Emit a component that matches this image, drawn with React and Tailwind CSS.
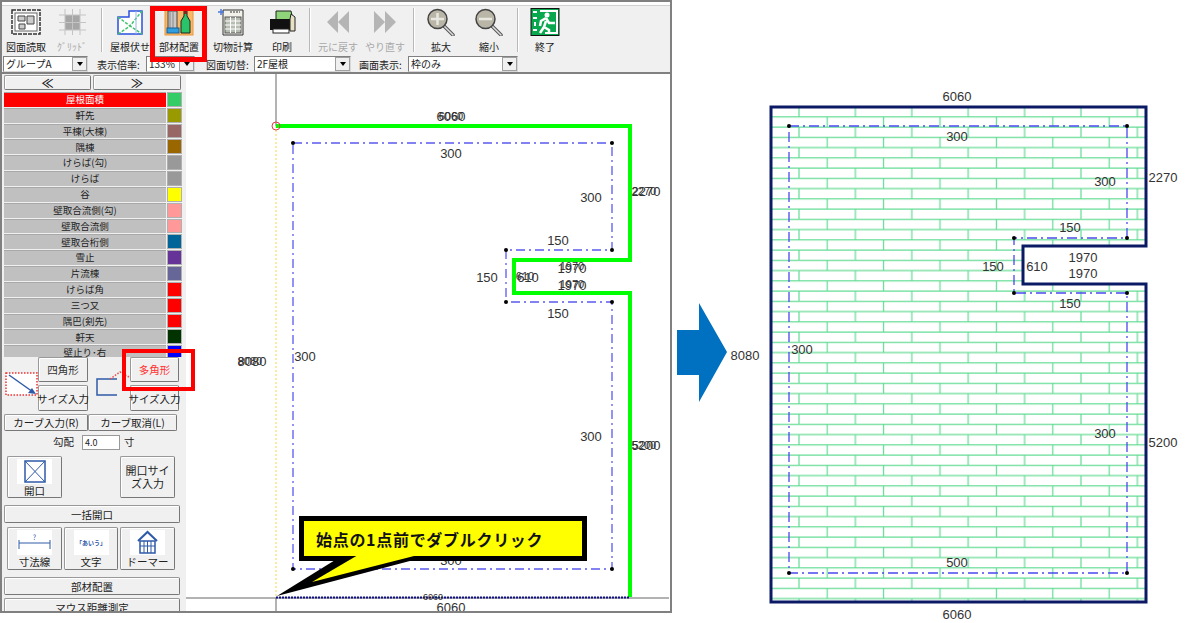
const rows = [
  { label: "屋根面積", color: "bg-[#33cc66]", active: true },
  { label: "軒先", color: "bg-[#999900]" },
  { label: "平棟(大棟)", color: "bg-[#996666]" },
  { label: "隅棟", color: "bg-[#996600]" },
  { label: "けらば(勾)", color: "bg-[#999999]" },
  { label: "けらば", color: "bg-[#999999]" },
  { label: "谷", color: "bg-[#ffff00]" },
  { label: "壁取合流側(勾)", color: "bg-[#ff9999]" },
  { label: "壁取合流側", color: "bg-[#ff9999]" },
  { label: "壁取合桁側", color: "bg-[#006699]" },
  { label: "雪止", color: "bg-[#663399]" },
  { label: "片流棟", color: "bg-[#666699]" },
  { label: "けらば角", color: "bg-[#ff0000]" },
  { label: "三つ又", color: "bg-[#ff0000]" },
  { label: "隅巴(剣先)", color: "bg-[#ff0000]" },
  { label: "軒天", color: "bg-[#003300]" },
  { label: "壁止り･右", color: "bg-[#0000ff]" },
];

function PlanIcon() {
  return (
    <svg width="30" height="28" viewBox="0 0 30 28">
      <rect x="1" y="2" width="28" height="24" fill="#f4f4f4" stroke="#333" strokeWidth="1.5" strokeDasharray="4 1" />
      <rect x="4" y="5" width="22" height="18" fill="#fff" stroke="#666" />
      <path d="M7 8h7v5H7zM16 8h7v8h-7zM8 16h6v5H8z" fill="#ccc" stroke="#444" />
    </svg>
  );
}

function GridIcon() {
  return (
    <svg width="30" height="28" viewBox="0 0 30 28">
      <rect x="8" y="7" width="15" height="15" fill="#a6a6a6" />
      <path d="M8 1v26M15.5 1v26M23 1v26M2 7h27M2 14.500h27M2 22h27" stroke="#c4c4c4" />
    </svg>
  );
}

function RoofIcon() {
  return (
    <svg width="30" height="28" viewBox="0 0 30 28">
      <path d="M3 9h11V3h13v23H3z" fill="#fff" stroke="#2a4fe0" strokeWidth="1.5" />
      <path d="M3 9l12 9 12-15M3 26l12-8 12 8" fill="none" stroke="#3fc46a" strokeWidth="1.5" strokeDasharray="3 1.500" />
      <path d="M21 3v23" stroke="#9ab4f0" />
    </svg>
  );
}

function PartsIcon() {
  return (
    <svg width="30" height="28" viewBox="0 0 30 28">
      <rect x="1" y="1" width="28" height="26" fill="#fbb867" stroke="#e8963c" />
      <rect x="4" y="3" width="9" height="20" fill="#c9c9c9" stroke="#444" />
      <path d="M6 3v20M9 3v20" stroke="#888" />
      <rect x="3" y="20" width="12" height="5" fill="#2f9ee0" stroke="#14609a" />
      <path d="M20 2h3v6l3 5v12h-9V13l3-5z" fill="#29c46a" stroke="#222" />
      <path d="M20 2h3v4h-3z" fill="#7a2a20" />
    </svg>
  );
}

function CalcIcon() {
  return (
    <svg width="30" height="28" viewBox="0 0 30 28">
      <path d="M5 2h20v25H5z" fill="#f2f2ea" stroke="#333" />
      <rect x="7" y="9" width="16" height="16" fill="#b8bdb2" stroke="#555" />
      <path d="M7 13h16M7 17h16M7 21h16M12.500 9v16M17.500 9v16" stroke="#fff" />
      <path d="M3 1v6M0 4h6" stroke="#4a78d8" strokeWidth="1.500" />
      <path d="M12 4h10" stroke="#333" strokeDasharray="2 1" />
    </svg>
  );
}

function PrintIcon() {
  return (
    <svg width="30" height="28" viewBox="0 0 30 28">
      <path d="M9 3h15l2 9H9z" fill="#8fd47a" stroke="#222" />
      <path d="M3 11h23v11H3z" fill="#111" />
      <path d="M24 6l4 3v14h-5V11z" fill="#e8e2c4" stroke="#222" />
      <rect x="6" y="21" width="16" height="4" fill="#fff" stroke="#222" />
    </svg>
  );
}

function UndoIcon({ flip }) {
  return (
    <svg width="30" height="28" viewBox="0 0 30 28">
      <path
        d={flip ? "M4 3l11 11L4 25zM15 3l11 11-11 11z" : "M26 3L15 14l11 11zM15 3L4 14l11 11z"}
        fill="#b5b5b5"
      />
    </svg>
  );
}

function ZoomIcon({ plus }) {
  return (
    <svg width="30" height="28" viewBox="0 0 30 28">
      <path d="M18 18l9 9" stroke="#555" strokeWidth="3.500" strokeLinecap="round" />
      <path d="M18 18l9 9" stroke="#ddd" strokeWidth="1.500" strokeLinecap="round" />
      <circle cx="11.500" cy="11" r="9.500" fill="#b9b6a8" stroke="#444" strokeWidth="1.500" />
      <path d={plus ? "M5 11h13M11.500 5v12" : "M5 11h13"} stroke="#e8e8e0" strokeWidth="2.500" />
    </svg>
  );
}

function ExitIcon() {
  return (
    <svg width="30" height="28" viewBox="0 0 30 28">
      <rect x="1" y="0.500" width="28" height="27" fill="#09a84e" stroke="#111" />
      <path d="M10 3h17v22H15" fill="none" stroke="#fff" strokeWidth="2" />
      <circle cx="17" cy="7" r="2.500" fill="#fff" />
      <path d="M16 10l-5 3 -1 5M16 10l3 5h6M16 13l-2 6 5 3v4M14 19l-4 6" fill="none" stroke="#fff" strokeWidth="2.500" />
      <path d="M3 3h4v2H3zM3 9h4v2H3zM4 14h2v4H4zM3 21h4v2H3z" fill="#fff" />
    </svg>
  );
}

const toolbar = [
  { label: "図面読取", icon: <PlanIcon />, cls: "" },
  { label: "ｸﾞﾘｯﾄﾞ", icon: <GridIcon />, cls: "text-[#a8a8a8]" },
  { sep: "ml-[6px] mr-[4px]" },
  { label: "屋根伏せ", icon: <RoofIcon />, cls: "" },
  { label: "部材配置", icon: <PartsIcon />, cls: "ml-[3px]" },
  { label: "切物計算", icon: <CalcIcon />, cls: "ml-[8px]" },
  { label: "印刷", icon: <PrintIcon />, cls: "ml-[3px]" },
  { sep: "ml-[4px] mr-[4px]" },
  { label: "元に戻す", icon: <UndoIcon />, cls: "text-[#a8a8a8]" },
  { label: "やり直す", icon: <UndoIcon flip />, cls: "ml-[1px] text-[#a8a8a8]" },
  { sep: "ml-[5px] mr-[3px]" },
  { label: "拡大", icon: <ZoomIcon plus />, cls: "" },
  { label: "縮小", icon: <ZoomIcon />, cls: "ml-[2px]" },
  { sep: "ml-[5px] mr-[3px]" },
  { label: "終了", icon: <ExitIcon />, cls: "" },
];

function Combo({ value, width }) {
  return (
    <div className={`flex items-center h-[16px] bg-white border border-t-[#808080] border-l-[#808080] border-r-[#d8d8d8] border-b-[#d8d8d8] ${width}`}>
      <span className="flex-1 pl-[2px] text-[10px] leading-[14px] truncate">{value}</span>
      <span className="flex items-center justify-center w-[15px] h-[14px] bg-[#f0f0f0] border border-[#a0a0a0]">
        <span className="border-x-[3px] border-x-transparent border-t-[4px] border-t-black" />
      </span>
    </div>
  );
}

function Btn({ children, className = "" }) {
  return (
    <div className={`flex flex-col items-center justify-center bg-[#f0f0f0] border border-[#999999] border-b-[#777777] border-r-[#777777] rounded-[2px] shadow-[inset_1px_1px_0_#ffffff] text-[10.500px] leading-[11px] text-center text-[#222] ${className}`}>
      {children}
    </div>
  );
}

function Dim({ x, y, size = 13, children }) {
  return (
    <text x={x} y={y} fontSize={size} textAnchor="middle" dominantBaseline="central" fill="#333" className="font-['Liberation_Sans',sans-serif]">
      {children}
    </text>
  );
}

function Dots({ points }) {
  return points.map(([x, y]) => <circle key={`${x}-${y}`} cx={x} cy={y} r="2" fill="#000" />);
}

function Canvas() {
  return (
    <svg className="block w-[483px] h-[537px]" viewBox="186 74 483 537">
      <path d="M276 74v52M276 598v14M186 598h483" stroke="#666" strokeWidth="1" fill="none" />
      <path d="M276 126v471" stroke="#f5d84a" strokeDasharray="2 2" />
      <path d="M293 143H612V250H506V302H612V569H293Z" fill="none" stroke="#5a5af0" strokeWidth="1.300" strokeDasharray="9 4 2 4" />
      <Dots points={[[293, 143], [612, 143], [612, 250], [506, 250], [506, 302], [612, 302], [612, 569], [293, 569]]} />
      <path d="M276 126H630V260H514V293H630V597" fill="none" stroke="#00ff00" strokeWidth="4" />
      <path d="M276 597.500H630" stroke="#101080" strokeWidth="2" strokeDasharray="2 1" />
      <circle cx="276" cy="126" r="4" fill="none" stroke="#e04040" />
      <Dim x={451} y={116}>6060</Dim>
      <Dim x={451} y={116} size={11}>6060</Dim>
      <Dim x={451} y={153}>300</Dim>
      <Dim x={591} y={197}>300</Dim>
      <Dim x={646} y={191}>2270</Dim>
      <Dim x={644} y={191} size={11}>2270</Dim>
      <Dim x={558} y={240}>150</Dim>
      <Dim x={487} y={277}>150</Dim>
      <Dim x={528} y={277}>610</Dim>
      <Dim x={525} y={276} size={11}>610</Dim>
      <Dim x={572} y={268}>1970</Dim>
      <Dim x={572} y={266} size={11}>1970</Dim>
      <Dim x={572} y={285}>1970</Dim>
      <Dim x={572} y={284} size={11}>1970</Dim>
      <Dim x={558} y={313}>150</Dim>
      <Dim x={591} y={436}>300</Dim>
      <Dim x={646} y={445}>5200</Dim>
      <Dim x={644} y={445} size={11}>5200</Dim>
      <Dim x={252} y={361}>8080</Dim>
      <Dim x={250} y={361} size={11}>8080</Dim>
      <Dim x={305} y={356}>300</Dim>
      <Dim x={451} y={560}>300</Dim>
      <Dim x={433} y={597} size={9}>6060</Dim>
      <Dim x={451} y={607}>6060</Dim>
      <path d="M277 596L340 557H425Z" fill="#000" />
      <rect x="301.500" y="518.500" width="283" height="40" fill="#ffff00" stroke="#000" strokeWidth="5" />
      <path d="M312 582L358 555H418Z" fill="#ffff00" />
      <text x="316" y="539" fontSize="16" letterSpacing="0.7" fontWeight="700" dominantBaseline="central" fill="#111" className="font-['Noto_Sans_CJK_JP',sans-serif]">
        始点の1点前でダブルクリック
      </text>
    </svg>
  );
}

function RightDiagram() {
  const outline = "M771 107H1146V246H1023V284H1146V602H771Z";
  return (
    <svg className="block w-[516px] h-[623px]" viewBox="672 0 516 623">
      <defs>
        <pattern id="bricks" patternUnits="userSpaceOnUse" x="798" y="105.500" width="56.400" height="20.500">
          <path d="M0 1H56.400M0 11.250H56.400M1 1V11.250M29.200 11.250V20.500M29.200 0V1" fill="none" stroke="#62dc94" strokeWidth="1.200" />
        </pattern>
      </defs>
      <path d="M677 330H699V303L727 352L699 402V375H677Z" fill="#0070c0" />
      <path d={outline} fill="url(#bricks)" />
      <path d="M789 126H1127V238H1014V293H1127V573H789Z" fill="none" stroke="#4a4af0" strokeWidth="1.300" strokeDasharray="10 4 2 4" />
      <Dots points={[[789, 126], [1127, 126], [1127, 238], [1014, 238], [1014, 293], [1127, 293], [1127, 573], [789, 573]]} />
      <path d={outline} fill="none" stroke="#0c1a66" strokeWidth="3" />
      <Dim x={957} y={96}>6060</Dim>
      <Dim x={957} y={136}>300</Dim>
      <Dim x={1105} y={181}>300</Dim>
      <Dim x={1163} y={177}>2270</Dim>
      <Dim x={1070} y={227}>150</Dim>
      <Dim x={993} y={266}>150</Dim>
      <Dim x={1037} y={266}>610</Dim>
      <Dim x={1083} y={257}>1970</Dim>
      <Dim x={1083} y={273}>1970</Dim>
      <Dim x={1070} y={303}>150</Dim>
      <Dim x={745} y={355}>8080</Dim>
      <Dim x={802} y={349}>300</Dim>
      <Dim x={1105} y={433}>300</Dim>
      <Dim x={1163} y={442}>5200</Dim>
      <Dim x={957} y={562}>500</Dim>
      <Dim x={957} y={614}>6060</Dim>
    </svg>
  );
}

export default function App() {
  return (
    <div className="relative flex w-[1188px] h-[623px] bg-white overflow-hidden text-[#222] font-['Noto_Sans_CJK_JP',sans-serif]">
      {/* left window */}
      <div className="flex flex-col w-[672px] h-[613px] border-2 border-[#808080] bg-[#f0f0f0] overflow-hidden">
        <div className="h-[4px] border-b border-[#d0d0d0] bg-white shrink-0" />
        <div className="flex items-stretch h-[48px] pl-[1px] pt-[2px] shrink-0">
          {toolbar.map((t, i) =>
            t.sep ? (
              <div key={i} className={`w-[2px] h-[44px] border-l border-[#b8b8b8] bg-white ${t.sep}`} />
            ) : (
              <div key={i} className={`flex flex-col items-center w-[46px] ${t.cls}`}>
                <div className="h-[30px]">{t.icon}</div>
                <span className="mt-[3px] text-[10px] leading-[12px] whitespace-nowrap">{t.label}</span>
              </div>
            )
          )}
        </div>
        <div className="flex items-end h-[18px] pl-[1px] border-b-2 border-[#808080] box-content shrink-0 text-[10px] leading-[15px]">
          <Combo value="グループA" width="w-[85px]" />
          <span className="ml-[9px] w-[49px] whitespace-nowrap">表示倍率:</span>
          <Combo value="133%" width="w-[49px]" />
          <span className="ml-[11px] w-[48px] whitespace-nowrap">図面切替:</span>
          <Combo value="2F屋根" width="w-[97px]" />
          <span className="ml-[8px] w-[49px] whitespace-nowrap">画面表示:</span>
          <Combo value="枠のみ" width="w-[110px]" />
        </div>

        <div className="flex flex-1 min-h-0">
          {/* side panel */}
          <div className="flex flex-col w-[184px] shrink-0 pl-[2px] pr-[3px] pt-[1px] overflow-hidden text-[#222]">
            <div className="flex gap-[2px] h-[15px] shrink-0">
              <Btn className="w-[87px] text-[12px] font-bold">≪</Btn>
              <Btn className="w-[88px] text-[12px] font-bold">≫</Btn>
            </div>
            <div className="mt-[2px] h-[265px] shrink-0 overflow-hidden">
              {rows.map((r) => (
                <div key={r.label} className="flex gap-[1px] h-[15.830px] pb-[1px]">
                  <div className={`w-[162px] flex items-center justify-center text-[9.500px] leading-none border-t border-[#a8a8a8] ${r.active ? "bg-[#ff0000] text-white" : "bg-[#c0c0c0]"}`}>
                    {r.label}
                  </div>
                  <div className={`w-[15px] border border-[#b0b0b0] ${r.color}`} />
                </div>
              ))}
            </div>
            <div className="flex h-[54px] shrink-0">
              <div className="ml-[1px] mt-[15px] w-[33px]">
                <svg width="33" height="24" viewBox="0 0 33 24">
                  <rect x="1" y="1" width="31" height="22" fill="#fff" stroke="#ee3030" strokeWidth="1.500" strokeDasharray="1.500 1.500" />
                  <path d="M4 3l24 17" stroke="#2f5aa8" strokeWidth="1.500" />
                  <path d="M31 22l-8-1 4-5z" fill="#2f5aa8" />
                </svg>
              </div>
              <div className="flex flex-col gap-[3px] w-[50px]">
                <Btn className="h-[25px] text-[#333]">四角形</Btn>
                <Btn className="h-[26px] text-[9px] whitespace-nowrap">サイズ入力</Btn>
              </div>
              <div className="ml-[7px] mt-[14px] w-[35px]">
                <svg width="35" height="25" viewBox="0 0 35 25">
                  <path d="M22 8H2v16h20" fill="none" stroke="#2f5aa8" strokeWidth="1.500" />
                  <path d="M15 8l10-7 9 5" fill="none" stroke="#ee5050" strokeWidth="1.500" strokeDasharray="1.500 1.500" />
                </svg>
              </div>
              <div className="flex flex-col gap-[3px] w-[49px]">
                <Btn className="h-[25px] text-[#ff3030] border-[#555]">多角形</Btn>
                <Btn className="h-[26px] text-[9px] whitespace-nowrap">サイズ入力</Btn>
              </div>
            </div>
            <div className="flex mt-[3px] h-[17px] shrink-0">
              <Btn className="w-[84px]">カーブ入力(R)</Btn>
              <Btn className="w-[89px]">カーブ取消(L)</Btn>
            </div>
            <div className="flex items-center mt-[3px] h-[16px] shrink-0 text-[10.500px]">
              <span className="ml-[49px] w-[29px]">勾配</span>
              <span className="w-[38px] h-[15px] pl-[2px] bg-white border border-[#999] text-[9px] leading-[13px]">4.0</span>
              <span className="ml-[4px]">寸</span>
            </div>
            <div className="flex justify-between w-[168px] ml-[3px] mt-[6px] h-[42px] shrink-0">
              <Btn className="w-[55px]">
                <svg width="35" height="25" viewBox="0 0 35 25">
                  <rect width="35" height="25" fill="#fff" />
                  <rect x="8" y="2" width="20" height="21" fill="none" stroke="#2f5aa8" strokeWidth="1.500" />
                  <path d="M8 2l20 21M28 2L8 23" stroke="#2f5aa8" />
                </svg>
                <span className="mt-[1px]">開口</span>
              </Btn>
              <Btn className="w-[55px] text-[11px] leading-[13px]">開口サイ<br />ズ入力</Btn>
            </div>
            <Btn className="mt-[7px] h-[18px] shrink-0 w-[176px]">一括開口</Btn>
            <div className="flex gap-[2px] w-[168px] ml-[3px] mt-[4px] h-[43px] shrink-0">
              <Btn className="w-[55px]">
                <svg width="35" height="25" viewBox="0 0 35 25">
                  <rect width="35" height="25" fill="#fff" />
                  <path d="M2 13h31M2 10v9M33 10v9" stroke="#2f5aa8" />
                  <text x="17.500" y="10" fontSize="7" textAnchor="middle" fill="#2f5aa8">?</text>
                </svg>
                <span className="mt-[1px]">寸法線</span>
              </Btn>
              <Btn className="w-[54px]">
                <div className="flex items-center justify-center w-[35px] h-[25px] bg-white text-[6px] text-[#2f5aa8] font-bold whitespace-nowrap">「あいう」</div>
                <span className="mt-[1px]">文字</span>
              </Btn>
              <Btn className="w-[55px]">
                <svg width="35" height="25" viewBox="0 0 35 25">
                  <rect width="35" height="25" fill="#fff" />
                  <path d="M8 11L17.500 2 27 11" fill="none" stroke="#2f5aa8" strokeWidth="2" />
                  <path d="M10 11h15v12H10z" fill="none" stroke="#2f5aa8" strokeWidth="1.500" />
                  <path d="M14 11v12M17.500 11v12M21 11v12M10 16h15" stroke="#2f5aa8" />
                </svg>
                <span className="mt-[1px]">ドーマー</span>
              </Btn>
            </div>
            <Btn className="mt-[7px] h-[18px] shrink-0 w-[176px]">部材配置</Btn>
            <Btn className="mt-[3px] h-[18px] shrink-0 w-[176px]">マウス距離測定</Btn>
          </div>
          {/* drawing area */}
          <div className="flex-1 min-w-0 bg-white overflow-hidden">
            <Canvas />
          </div>
        </div>
      </div>

      <RightDiagram />

      {/* red highlights over the app */}
      <div className="absolute left-[150px] top-[6px] w-[57px] h-[56px] border-[5px] border-[#ff0000]" />
      <div className="absolute left-[122px] top-[349px] w-[73px] h-[42px] border-[4px] border-[#ff0000]" />
    </div>
  );
}
